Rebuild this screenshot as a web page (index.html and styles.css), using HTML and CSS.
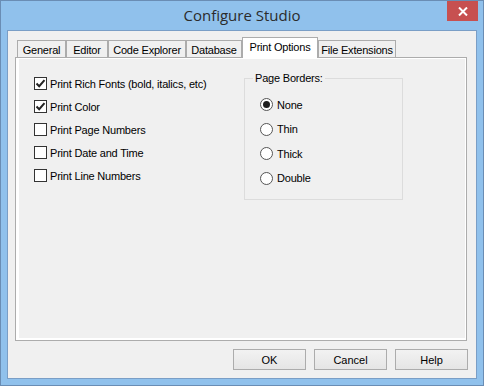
FILE: index.html
```html
<!DOCTYPE html>
<html lang="en">
<head>
    <meta charset="UTF-8">
    <title>Configure Studio</title>
    <link rel="stylesheet" href="styles.css">
</head>
<body>
    <div class="window">
        <div class="titlebar">
            <span class="title">Configure Studio</span>
            <div class="close-btn">
                <svg width="10" height="9" viewBox="0 0 10 9">
                    <path d="M1 0.5 L9 8.5 M9 0.5 L1 8.5" stroke="#fff" stroke-width="2" fill="none"/>
                </svg>
            </div>
        </div>

        <div class="client">
            <div class="tabs">
                <div class="tab" style="width: 49px">General</div>
                <div class="tab" style="width: 42px">Editor</div>
                <div class="tab" style="width: 78px">Code Explorer</div>
                <div class="tab" style="width: 56px">Database</div>
                <div class="tab active" style="width: 76px">Print Options</div>
                <div class="tab" style="width: 78px">File Extensions</div>
            </div>

            <div class="panel">
                <div class="options">
                    <div class="check-row">
                        <span class="checkbox checked"><svg width="11" height="11" viewBox="0 0 11 11"><path d="M1.5 5.5 L4.2 8.2 L9.5 2.2" stroke="#222" stroke-width="2" fill="none"/></svg></span>
                        <span>Print Rich Fonts (bold, italics, etc)</span>
                    </div>
                    <div class="check-row">
                        <span class="checkbox checked"><svg width="11" height="11" viewBox="0 0 11 11"><path d="M1.5 5.5 L4.2 8.2 L9.5 2.2" stroke="#222" stroke-width="2" fill="none"/></svg></span>
                        <span>Print Color</span>
                    </div>
                    <div class="check-row">
                        <span class="checkbox"></span>
                        <span>Print Page Numbers</span>
                    </div>
                    <div class="check-row">
                        <span class="checkbox"></span>
                        <span>Print Date and Time</span>
                    </div>
                    <div class="check-row">
                        <span class="checkbox"></span>
                        <span>Print Line Numbers</span>
                    </div>
                </div>

                <div class="groupbox">
                    <span class="group-label">Page Borders:</span>
                    <div class="radio-row">
                        <span class="radio selected"></span>
                        <span>None</span>
                    </div>
                    <div class="radio-row">
                        <span class="radio"></span>
                        <span>Thin</span>
                    </div>
                    <div class="radio-row">
                        <span class="radio"></span>
                        <span>Thick</span>
                    </div>
                    <div class="radio-row">
                        <span class="radio"></span>
                        <span>Double</span>
                    </div>
                </div>
            </div>

            <div class="buttons">
                <button class="btn">OK</button>
                <button class="btn">Cancel</button>
                <button class="btn">Help</button>
            </div>
        </div>
    </div>
</body>
</html>
```

FILE: styles.css
```css
body {
    margin: 0;
    padding: 0;
    font-family: "Liberation Sans", Arial, sans-serif;
    font-size: 11px;
    color: #000;
}
.window {
    width: 484px;
    height: 386px;
    box-sizing: border-box;
    border: 1px solid #6a8db4;
    background-color: #90c1ec;
    padding: 0 6px 6px 6px;
    display: flex;
    flex-direction: column;
}
.titlebar {
    height: 29px;
    position: relative;
    display: flex;
    align-items: center;
    justify-content: center;
    margin: 0 -6px;
}
.title {
    font-family: "Open Sans", "Noto Sans", sans-serif;
    font-size: 15px;
    color: #2b2b2b;
    padding-bottom: 1px;
}
.close-btn {
    position: absolute;
    top: 0;
    right: 5px;
    width: 31px;
    height: 20px;
    background-color: #c75050;
    display: flex;
    align-items: center;
    justify-content: center;
}
.client {
    flex: 1;
    border: 1px solid #7a9ec6;
    background-color: #f0f0f0;
    padding: 6px 9px 8px 7px;
    display: flex;
    flex-direction: column;
}
.tabs {
    display: flex;
    align-items: flex-end;
    height: 21px;
    padding-left: 2px;
    margin-bottom: -1px;
}
.tab {
    box-sizing: border-box;
    height: 18px;
    border: 1px solid #acacac;
    border-bottom: none;
    background-color: #f0f0f0;
    display: flex;
    justify-content: center;
    align-items: center;
    letter-spacing: -0.2px;
    padding-top: 1px;
    margin-right: 0;
}
.tab.active {
    position: relative;
    z-index: 1;
    height: 21px;
    background-color: #fff;
    padding-top: 0;
    padding-bottom: 2px;
}
.panel {
    height: 284px;
    box-sizing: border-box;
    border: 1px solid #acacac;
    box-shadow: inset 3px 1px 0 #fff, inset -1px -2px 0 #fff;
    padding: 19px 0 0 18px;
    display: flex;
    align-items: flex-start;
}
.options {
    width: 210px;
    display: flex;
    flex-direction: column;
    gap: 10px;
}
.check-row,
.radio-row {
    display: flex;
    align-items: center;
    height: 13px;
    letter-spacing: -0.2px;
    white-space: nowrap;
}
.checkbox {
    box-sizing: border-box;
    width: 13px;
    height: 13px;
    border: 1px solid #333;
    background-color: #fff;
    margin-right: 3px;
    display: flex;
    align-items: center;
    justify-content: center;
}
.groupbox {
    position: relative;
    box-sizing: border-box;
    width: 159px;
    height: 122px;
    margin-top: 1px;
    border: 1px solid #dcdcdc;
    padding: 19px 0 0 15px;
    display: flex;
    flex-direction: column;
    gap: 11.5px;
}
.group-label {
    position: absolute;
    top: -7px;
    left: 8px;
    padding: 0 2px;
    background-color: #f0f0f0;
    letter-spacing: -0.2px;
}
.radio {
    box-sizing: border-box;
    width: 13px;
    height: 13px;
    border: 1px solid #555;
    border-radius: 50%;
    background-color: #fff;
    margin-right: 4px;
    display: flex;
    align-items: center;
    justify-content: center;
}
.radio.selected::after {
    content: "";
    width: 7px;
    height: 7px;
    border-radius: 50%;
    background-color: #1e1e1e;
}
.buttons {
    display: flex;
    justify-content: flex-end;
    gap: 8px;
    margin-top: 8px;
    padding-right: 0;
    margin-right: -1px;
}
.btn {
    width: 73px;
    height: 21px;
    box-sizing: border-box;
    border: 1px solid #acacac;
    background: linear-gradient(#f2f2f2, #e5e5e5);
    font-family: "Liberation Sans", Arial, sans-serif;
    font-size: 11px;
    color: #000;
    padding: 0;
}
```
